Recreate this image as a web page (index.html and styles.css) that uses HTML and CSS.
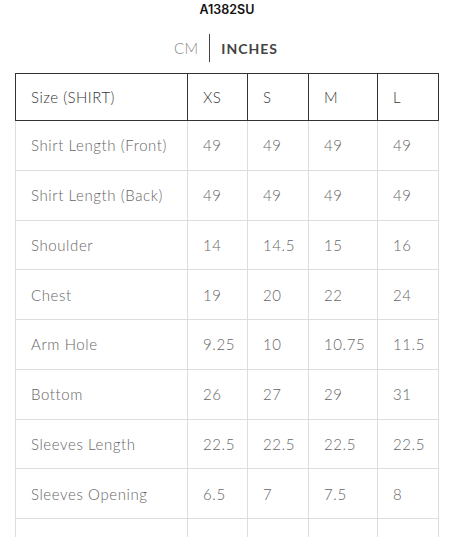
FILE: index.html
```html
<!DOCTYPE html>
<html>
<head>
<meta charset="utf-8">
<link rel="stylesheet" href="styles.css">
</head>
<body>
<div class="page">
  <div class="title">A1382SU</div>
  <div class="units">
    <span class="unit">CM</span>
    <span class="sep"></span>
    <span class="unit active">INCHES</span>
  </div>
  <table class="size-table">
    <colgroup>
      <col class="c-label"><col class="c-xs"><col class="c-s"><col class="c-m"><col class="c-l">
    </colgroup>
    <thead>
      <tr><th>Size (SHIRT)</th><th>XS</th><th>S</th><th>M</th><th>L</th></tr>
    </thead>
    <tbody>
      <tr><td>Shirt Length (Front)</td><td>49</td><td>49</td><td>49</td><td>49</td></tr>
      <tr><td>Shirt Length (Back)</td><td>49</td><td>49</td><td>49</td><td>49</td></tr>
      <tr><td>Shoulder</td><td>14</td><td>14.5</td><td>15</td><td>16</td></tr>
      <tr><td>Chest</td><td>19</td><td>20</td><td>22</td><td>24</td></tr>
      <tr><td>Arm Hole</td><td>9.25</td><td>10</td><td>10.75</td><td>11.5</td></tr>
      <tr><td>Bottom</td><td>26</td><td>27</td><td>29</td><td>31</td></tr>
      <tr><td>Sleeves Length</td><td>22.5</td><td>22.5</td><td>22.5</td><td>22.5</td></tr>
      <tr><td>Sleeves Opening</td><td>6.5</td><td>7</td><td>7.5</td><td>8</td></tr>
      <tr><td>&nbsp;</td><td>&nbsp;</td><td>&nbsp;</td><td>&nbsp;</td><td>&nbsp;</td></tr>
    </tbody>
  </table>
</div>
</body>
</html>
```
FILE: styles.css
```css
html, body {
  margin: 0;
  padding: 0;
  background: #fff;
}
.page {
  width: 454px;
  font-family: Lato, "Noto Sans", sans-serif;
}
.title {
  text-align: center;
  font-family: Inter, "Liberation Sans", sans-serif;
  font-weight: 600;
  font-size: 12.5px;
  line-height: 18px;
  color: #111;
  padding-top: 1px;
}
.units {
  margin-top: 15px;
  height: 28px;
  display: flex;
  justify-content: center;
  align-items: center;
  gap: 11px;
  padding-right: 2px;
}
.unit {
  font-size: 15px;
  font-weight: 300;
  color: #888;
  letter-spacing: 0.3px;
}
.unit.active {
  font-weight: 700;
  color: #444;
  font-size: 14px;
  letter-spacing: 1px;
}
.sep {
  width: 1px;
  height: 28px;
  background: #444;
}
.size-table {
  margin-top: 11px;
  margin-left: 15px;
  border-collapse: collapse;
  table-layout: fixed;
  width: 423px;
}
.c-label { width: 172px; }
.c-xs { width: 60px; }
.c-s { width: 61px; }
.c-m { width: 69px; }
.c-l { width: 61px; }
.size-table th,
.size-table td {
  text-align: left;
  padding: 0 0 0 15px;
  font-size: 15px;
  font-weight: 300;
  letter-spacing: 0.6px;
  white-space: nowrap;
}
.size-table th {
  height: 46px;
  border: 1px solid #333;
  color: #333;
  letter-spacing: 0.5px;
}
.size-table td {
  height: 48.75px;
  border: 1px solid #ddd;
  color: #666;
}
```
